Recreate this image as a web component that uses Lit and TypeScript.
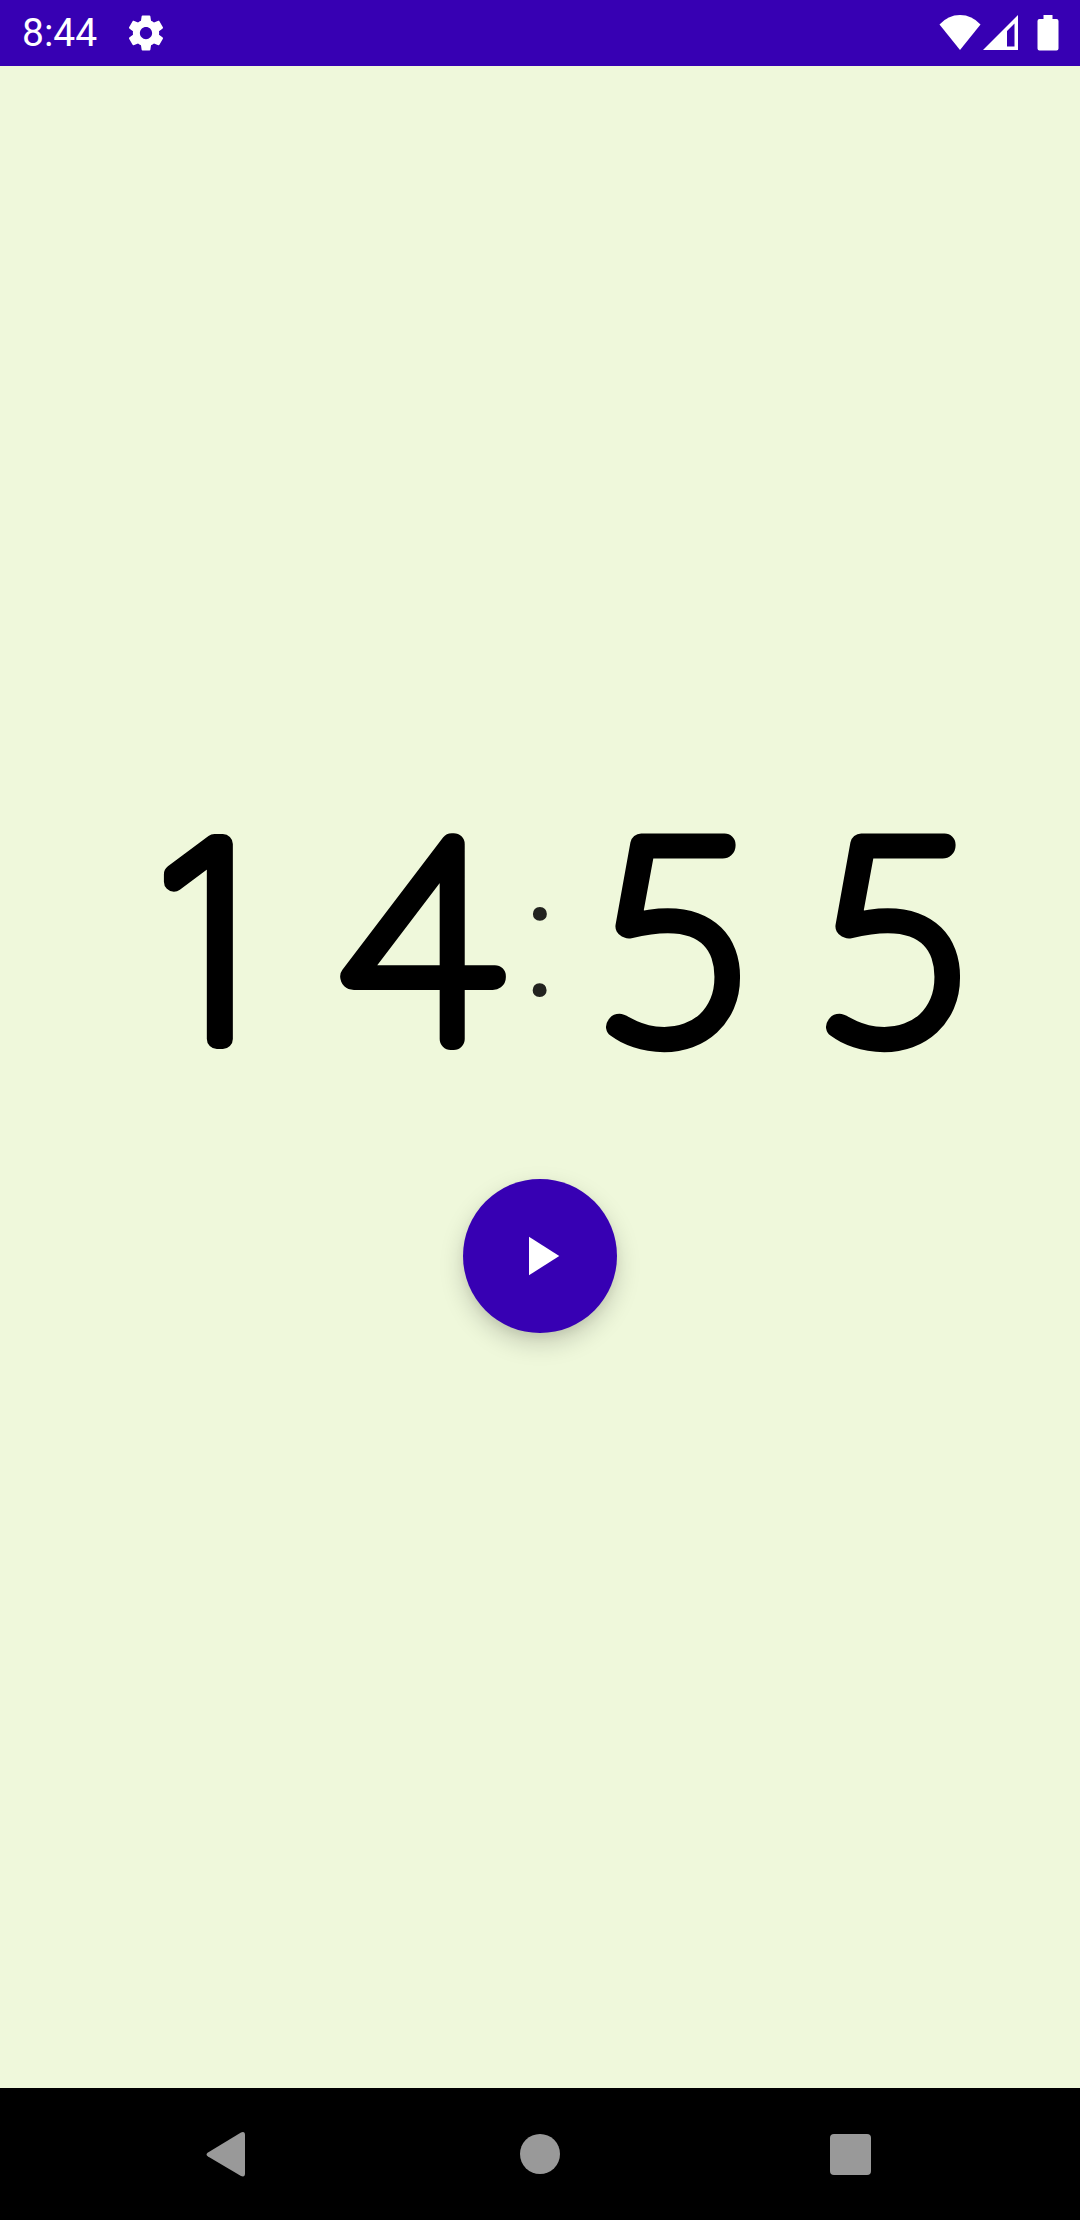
import { LitElement, html, css } from "lit";
import { customElement, property, state } from "lit/decorators.js";

@customElement("timer-digit")
export class TimerDigit extends LitElement {
  @property() value = "0";

  static styles = css`
    :host {
      display: block;
      flex: 0 1 220px;
    }
    svg {
      display: block;
      width: 100%;
      overflow: visible;
    }
    .digit {
      font: 100 278px Lato, sans-serif;
      text-anchor: middle;
      fill: #000;
      stroke: #000;
      stroke-width: 22px;
      stroke-linejoin: round;
      stroke-linecap: round;
    }
    .plain {
      font-family: Inter, sans-serif;
      font-size: 268px;
      stroke-width: 20px;
    }
  `;

  render() {
    const plain = this.value === "1" ? " plain" : "";
    return html`<svg viewBox="0 0 220 244">
      <text class="digit${plain}" x="110" y="218">${this.value}</text>
    </svg>`;
  }
}

@customElement("status-bar")
export class StatusBar extends LitElement {
  static styles = css`
    :host {
      display: flex;
      align-items: center;
      height: 66px;
      padding: 0 20px 0 22px;
      background: #3700b3;
      color: #fff;
      font: 400 39px/68px Roboto, sans-serif;
    }
    svg {
      display: block;
      fill: currentColor;
    }
    .gear {
      margin-left: 28px;
    }
    .system {
      display: flex;
      margin-left: auto;
    }
    .battery {
      margin-left: 18px;
    }
  `;

  render() {
    return html`
      <time>8:44</time>
      <svg class="gear" width="42" height="42" viewBox="0 0 24 24">
        <path
          d="M19.43 12.98c.04-.32.07-.64.07-.98s-.03-.66-.07-.98l2.11-1.65c.19-.15.24-.42.12-.64l-2-3.46c-.12-.22-.39-.3-.61-.22l-2.49 1c-.52-.4-1.08-.73-1.69-.98l-.38-2.65C14.46 2.18 14.25 2 14 2h-4c-.25 0-.46.18-.49.42l-.38 2.65c-.61.25-1.17.59-1.69.98l-2.49-1c-.23-.09-.49 0-.61.22l-2 3.46c-.13.22-.07.49.12.64l2.11 1.65c-.04.32-.07.65-.07.98s.03.66.07.98l-2.11 1.65c-.19.15-.24.42-.12.64l2 3.46c.12.22.39.3.61.22l2.49-1c.52.4 1.08.73 1.69.98l.38 2.65c.03.24.24.42.49.42h4c.25 0 .46-.18.49-.42l.38-2.65c.61-.25 1.17-.59 1.69-.98l2.49 1c.23.09.49 0 .61-.22l2-3.46c.12-.22.07-.49-.12-.64l-2.11-1.65zM12 15.5c-1.93 0-3.5-1.57-3.5-3.5s1.57-3.5 3.5-3.5 3.5 1.57 3.5 3.5-1.57 3.5-3.5 3.5z"
        />
      </svg>
      <div class="system">
        <svg width="44" height="42" viewBox="0 0 44 42">
          <path d="M1.5 12.5Q10 3 22 3T42.500 12.500L22 38Z" />
        </svg>
        <svg width="36" height="42" viewBox="0 0 36 42">
          <path fill-rule="evenodd" d="M1 38L36 3V38ZM25 19V34.500H32.500V11.500Z" />
        </svg>
        <svg class="battery" width="24" height="42" viewBox="0 0 24 42">
          <path d="M7.500 3H16.500V7H20.500Q22.500 7 22.500 9V36.500Q22.500 38.500 20.500 38.500H3.500Q1.500 38.500 1.500 36.500V9Q1.500 7 3.500 7H7.500Z" />
        </svg>
      </div>
    `;
  }
}

@customElement("nav-bar")
export class NavBar extends LitElement {
  static styles = css`
    :host {
      display: flex;
      justify-content: center;
      height: 132px;
      background: #000;
    }
    button {
      display: grid;
      place-items: center;
      flex: 0 1 311px;
      padding: 0;
      border: 0;
      background: none;
      color: #999;
    }
    svg {
      fill: currentColor;
    }
  `;

  render() {
    return html`
      <button aria-label="Back">
        <svg width="48" height="48" viewBox="0 0 48 48">
          <path d="M3 22.500L36 2.500Q40 1 40 5V43.500Q40 47.500 36 46L3 26.500Q0 24.500 3 22.500Z" />
        </svg>
      </button>
      <button aria-label="Home">
        <svg width="48" height="48" viewBox="0 0 48 48"><circle cx="24" cy="24" r="20" /></svg>
      </button>
      <button aria-label="Overview">
        <svg width="48" height="48" viewBox="0 0 48 48">
          <rect x="3" y="4" width="41" height="41" rx="4" />
        </svg>
      </button>
    `;
  }
}

@customElement("app-root")
export class AppRoot extends LitElement {
  @state() private seconds = 14 * 60 + 55;

  static styles = css`
    :host {
      display: flex;
      flex-direction: column;
      min-height: 100vh;
      background: #eff8db;
    }
    main {
      flex: 1;
      display: flex;
      flex-direction: column;
      align-items: center;
      justify-content: center;
      gap: 114px;
    }
    .clock {
      display: grid;
      grid-template-columns: 1fr 12px 1fr;
      align-self: stretch;
      align-items: start;
    }
    .pair {
      display: flex;
    }
    .minutes {
      justify-content: flex-end;
    }
    .seconds {
      padding-left: 18px;
    }
    .colon {
      display: flex;
      justify-content: center;
      color: #22231f;
      font: 300 168px/236px Roboto, sans-serif;
    }
    .play {
      display: grid;
      place-items: center;
      width: 154px;
      height: 154px;
      padding: 0;
      border: 0;
      border-radius: 50%;
      background: #3700b3;
      color: #fff;
      box-shadow: 0 10px 24px rgba(0, 0, 0, 0.18), 0 4px 8px rgba(0, 0, 0, 0.06);
    }
    .play svg {
      fill: currentColor;
    }
  `;

  render() {
    const minutes = String(Math.floor(this.seconds / 60)).padStart(2, "0");
    const seconds = String(this.seconds % 60).padStart(2, "0");
    const digits = (text: string) =>
      [...text].map((d) => html`<timer-digit .value=${d}></timer-digit>`);
    return html`
      <status-bar></status-bar>
      <main>
        <div class="clock" role="timer">
          <div class="pair minutes">${digits(minutes)}</div>
          <span class="colon">:</span>
          <div class="pair seconds">${digits(seconds)}</div>
        </div>
        <button class="play" aria-label="Start">
          <svg width="66" height="66" viewBox="0 0 24 24"><path d="M8 5v14l11-7z" /></svg>
        </button>
      </main>
      <nav-bar></nav-bar>
    `;
  }
}
